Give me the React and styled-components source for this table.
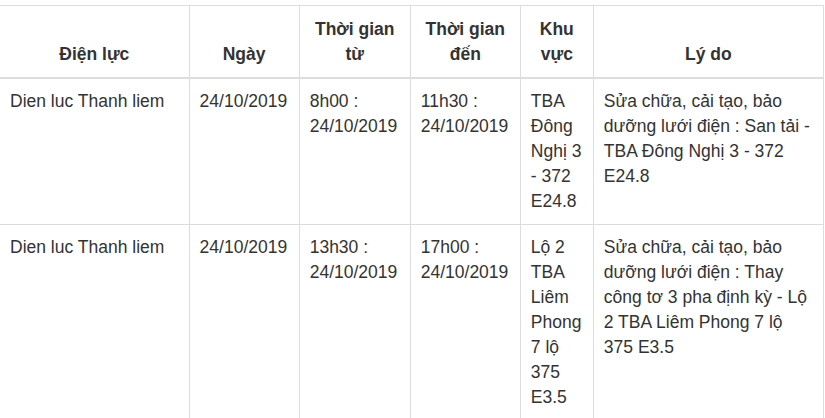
import React from "react";
import styled, { createGlobalStyle } from "styled-components";

const GlobalStyle = createGlobalStyle`
  body {
    margin: 0;
    background: #fff;
    font-family: "Liberation Sans", Arial, sans-serif;
    color: #333;
  }
`;

const columns = [
  { key: "unit", title: "Điện lực", width: 189 },
  { key: "date", title: "Ngày", width: 110 },
  { key: "from", title: "Thời gian từ", width: 111 },
  { key: "to", title: "Thời gian đến", width: 110 },
  { key: "area", title: "Khu vực", width: 73 },
  { key: "reason", title: "Lý do", width: 230 },
];

const rows = [
  {
    id: "1",
    unit: "Dien luc Thanh liem",
    date: "24/10/2019",
    from: "8h00 : 24/10/2019",
    to: "11h30 : 24/10/2019",
    area: "TBA Đông Nghị 3 - 372 E24.8",
    reason: "Sửa chữa, cải tạo, bảo dưỡng lưới điện : San tải - TBA Đông Nghị 3 - 372 E24.8",
  },
  {
    id: "2",
    unit: "Dien luc Thanh liem",
    date: "24/10/2019",
    from: "13h30 : 24/10/2019",
    to: "17h00 : 24/10/2019",
    area: "Lộ 2 TBA Liêm Phong 7 lộ 375 E3.5",
    reason:
      "Sửa chữa, cải tạo, bảo dưỡng lưới điện : Thay công tơ 3 pha định kỳ - Lộ 2 TBA Liêm Phong 7 lộ 375 E3.5",
  },
];

function App() {
  return (
    <>
      <GlobalStyle />
      <Wrapper>
        <Table>
          <colgroup>
            {columns.map((col) => (
              <col key={col.key} style={{ width: col.width }} />
            ))}
          </colgroup>
          <thead>
            <tr>
              {columns.map((col) => (
                <HeadCell key={col.key}>{col.title}</HeadCell>
              ))}
            </tr>
          </thead>
          <tbody>
            {rows.map((row) => (
              <tr key={row.id}>
                {columns.map((col) => (
                  <Cell key={col.key}>{row[col.key]}</Cell>
                ))}
              </tr>
            ))}
          </tbody>
        </Table>
      </Wrapper>
    </>
  );
}

export default App;

const Wrapper = styled.div`
  width: 825px;
  height: 418px;
  overflow: hidden;
  padding-top: 5px;
  box-sizing: border-box;
`;

const Table = styled.table`
  border-collapse: collapse;
  table-layout: fixed;
  width: 824px;
  font-size: 17.5px;
  line-height: 25px;
  border-top: 1px solid #ddd;
  border-right: 1px solid #ddd;
`;

const HeadCell = styled.th`
  padding: 11px 10px 10px;
  font-weight: bold;
  text-align: center;
  vertical-align: bottom;
  border-left: 1px solid #ddd;
  border-bottom: 2px solid #ddd;
  &:first-child {
    border-left: none;
  }
`;

const Cell = styled.td`
  padding: 10px;
  vertical-align: top;
  text-align: left;
  border-left: 1px solid #ddd;
  border-bottom: 1px solid #ddd;
  &:first-child {
    border-left: none;
  }
`;
